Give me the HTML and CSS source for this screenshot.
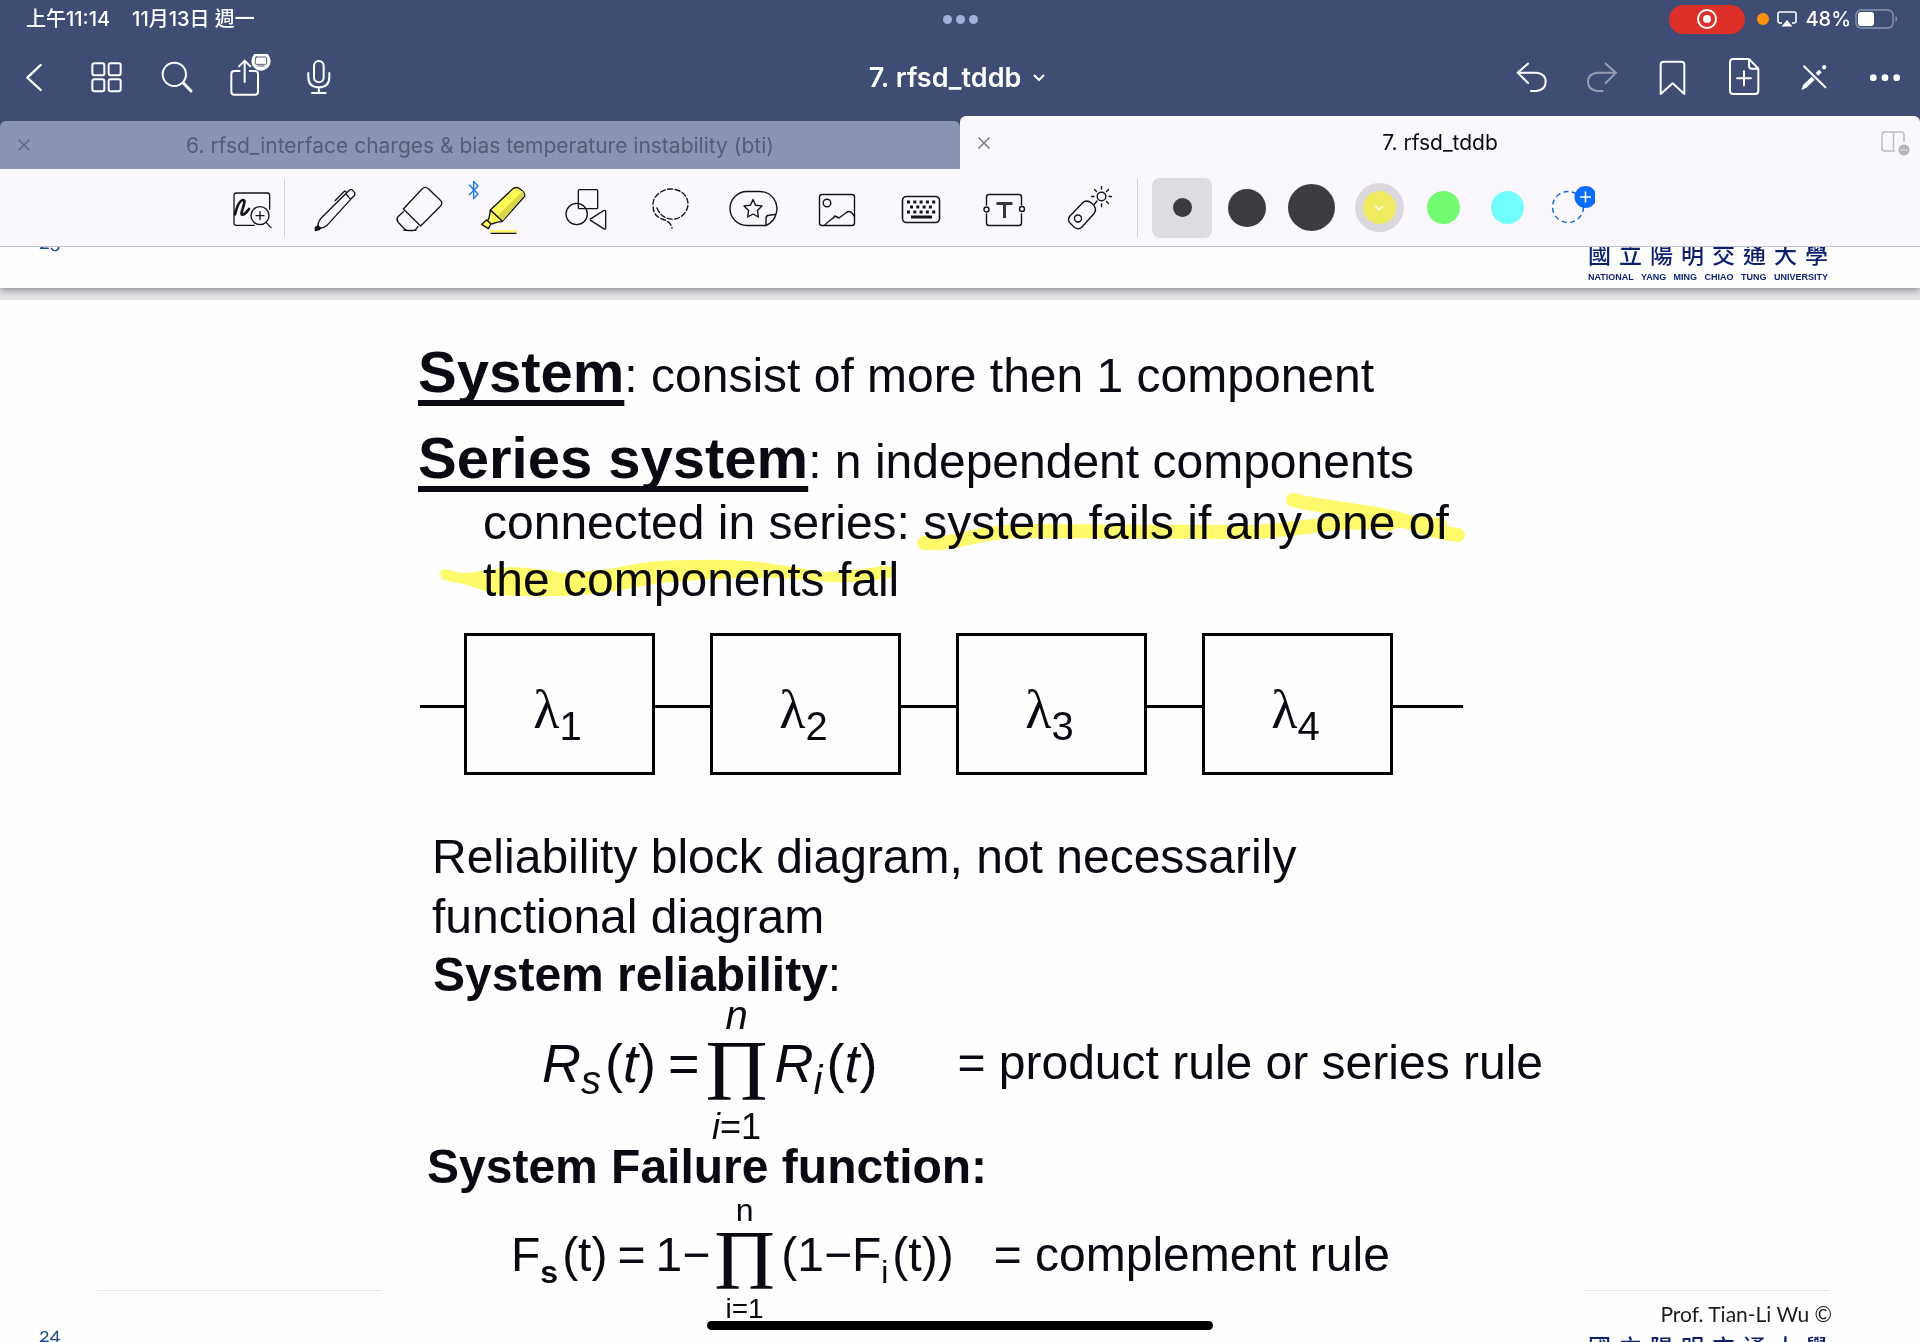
FILE: index.html
```html
<!DOCTYPE html>
<html lang="zh-Hant">
<head>
<meta charset="utf-8">
<meta name="viewport" content="width=device-width, initial-scale=1">
<title>7. rfsd_tddb</title>
<link rel="stylesheet" href="styles.css">
</head>
<body>
<div class="app">
  <header class="topbar">
    <div class="status">
      <div class="status-time"><span>上午11:14</span><span>11月13日 週一</span></div>
      <div class="status-dots"><i></i><i></i><i></i></div>
      <div class="status-right">
        <span class="recording"><svg width="22" height="22" viewBox="0 0 22 22"><circle cx="11" cy="11" r="9" fill="none" stroke="#fff" stroke-width="2"/><circle cx="11" cy="11" r="4" fill="#fff"/></svg></span>
        <span class="mic-dot"></span>
        <svg width="20" height="16" viewBox="0 0 20 16"><path d="M5 12H3a2 2 0 0 1-2-2V3a2 2 0 0 1 2-2h14a2 2 0 0 1 2 2v7a2 2 0 0 1-2 2h-2" fill="none" stroke="#fff" stroke-width="1.6"/><path d="M10 9l5.500 6.500h-11z" fill="#fff"/></svg>
        <span class="battery-label">48%</span>
        <svg width="43" height="20" viewBox="0 0 43 20"><rect x="1" y="1" width="37" height="18" rx="5" fill="none" stroke="#8b95b3" stroke-width="1.400"/><rect x="3" y="3" width="16" height="14" rx="3" fill="#fff"/><path d="M40.500 7c2 1 2 5 0 6z" fill="#8b95b3"/></svg>
      </div>
    </div>
    <nav class="nav">
      <div class="nav-group">
        <button class="nav-btn" aria-label="Back"><svg viewBox="35 162 144 144"><path d="M121 195L81 233l40 37" stroke-width="7"/></svg></button>
        <button class="nav-btn" aria-label="Thumbnails"><svg viewBox="248 162 144 144"><rect x="276" y="190" width="36" height="36" rx="6"/><rect x="325" y="190" width="36" height="36" rx="6"/><rect x="276" y="238" width="36" height="36" rx="6"/><rect x="325" y="238" width="36" height="36" rx="6"/></svg></button>
        <button class="nav-btn" aria-label="Search"><svg viewBox="461 162 144 144"><circle cx="522" cy="223" r="35"/><path d="M549 249l23 24" stroke-width="9"/></svg></button>
        <button class="nav-btn" aria-label="Share"><svg viewBox="674 162 144 144"><path d="M718 213h-16q-9 0-9 9v53q0 9 9 9h62q9 0 9-9v-53q0-9-9-9h-16M733 246v-64M716 199l17-17 17 17"/><circle cx="782" cy="183" r="29" fill="#fff" stroke="none"/><rect x="765" y="171" width="34" height="22" rx="3" stroke="#555b70" stroke-width="3"/><path d="M773 198h18" stroke="#555b70" stroke-width="3"/></svg></button>
        <button class="nav-btn" aria-label="Record"><svg viewBox="887 162 144 144"><rect x="941" y="183" width="29" height="64" rx="14.500"/><path d="M924 219v12q0 31 31.500 31t31.500-31v-12M955.500 262v17M935 279h41"/></svg></button>
      </div>
      <button class="doc-title">7. rfsd_tddb<svg width="12" height="8" viewBox="0 0 12 8"><path d="M1.500 1.500L6 6l4.500-4.500" stroke-width="2"/></svg></button>
      <div class="nav-group nav-end">
        <button class="nav-btn" aria-label="Undo"><svg viewBox="198 162 144 144"><path d="M264 191l-31 27 31 31M233 218h56q28 3 28 27t-28 28h-16"/></svg></button>
        <button class="nav-btn dim" aria-label="Redo"><svg viewBox="411 162 144 144"><path d="M497 191l31 27-31 31M528 218h-56q-28 3-28 27t28 28h16"/></svg></button>
        <button class="nav-btn" aria-label="Bookmark"><svg viewBox="624 162 144 144"><path d="M662 282v-88q0-9 9-9h53q9 0 9 9v88l-35-32z"/></svg></button>
        <button class="nav-btn" aria-label="Add page"><svg viewBox="837 162 144 144"><path d="M927 177h-47q-10 0-10 10v85q0 10 10 10h65q10 0 10-10v-66zM927 177v20q0 9 9 9h19M912 214v42M891 235h42"/></svg></button>
        <button class="nav-btn" aria-label="Read only"><svg viewBox="1050 162 144 144"><path d="M1092 199l64 63"/><path d="M1084 271l6-17 25-24 9 9-25 24z" fill="#fff" stroke="none"/><path d="M1131 223l10-10" stroke-width="11" stroke-linecap="butt"/><path d="M1152 202l1-1" stroke-width="12"/></svg></button>
        <button class="nav-btn" aria-label="More"><svg viewBox="1263 162 144 144"><g fill="#fff" stroke="none"><circle cx="1300" cy="233" r="10"/><circle cx="1335" cy="233" r="10"/><circle cx="1370" cy="233" r="10"/></g></svg></button>
      </div>
    </nav>
    <div class="tabs">
      <div class="tab">
        <button class="tab-close" aria-label="Close tab"><svg width="14" height="14" viewBox="0 0 14 14"><path d="M1.500 1.500l11 11M12.500 1.500l-11 11"/></svg></button>
        <a class="tab-name" href="#bti">6. rfsd_interface charges &amp; bias temperature instability (bti)</a>
      </div>
      <div class="tab tab-active">
        <button class="tab-close" aria-label="Close tab"><svg width="14" height="14" viewBox="0 0 14 14"><path d="M1.500 1.500l11 11M12.500 1.500l-11 11"/></svg></button>
        <a class="tab-name" href="#tddb">7. rfsd_tddb</a>
        <button class="tab-split" aria-label="Split view"><svg width="30" height="26" viewBox="1 0 30 26"><path d="M15 21H5q-3 0-3-3V5q0-3 3-3h16q3 0 3 3v7M13.500 2v19" fill="none" stroke="#bdbcc2" stroke-width="1.500"/><circle cx="24" cy="20" r="5.500" fill="#b4b3b9"/><path d="M21.500 20h.1M24 20h.1M26.500 20h.1" stroke="#fff" stroke-width="1.500" stroke-linecap="round"/></svg></button>
      </div>
    </div>
  </header>

  <div class="toolbar">
    <button class="tool tool-zoom" aria-label="Zoom window"><svg viewBox="84 75 144 144"><path d="M163 196h-54q-7 0-7-7v-83q0-7 7-7h93q7 0 7 7v42"/><path d="M105 163c5-20 14-43 25-43 12 0-13 44-3 44 9 0 14-10 20-17" stroke-width="8"/><circle cx="180" cy="167" r="27"/><path d="M168 167h24M180 155v24M199 188l14 15" stroke-width="4"/></svg></button>
    <span class="divider"></span>
    <div class="tool-list">
      <button class="tool" aria-label="Pen"><svg viewBox="333 75 144 144"><path d="M437 101l13-12 6 0 8 9v8l-12 12zM437 101l-74 74q-10 11-9 22l4 7q12 2 23-8l71-78"/><path d="M405 122l29-29 6 4"/><path d="M353 198l-7 5 0 9 11-3 5-5z" fill="#14131a"/></svg></button>
      <button class="tool" aria-label="Eraser"><svg viewBox="585 75 144 144"><path d="M610 147l56-60q10-10 20 0l35 34q9 9 0 18l-59 59zM610 155l-16 15q-6 8 0 16l19 21q5 5 14 5h12q7-1 11-7l4-6M612 211h36"/></svg></button>
      <button class="tool" aria-label="Highlighter"><svg viewBox="837 75 144 144"><path d="M871 150l69-65q12-6 20 2l10 8q7 9 2 16l-65 73z" fill="#fcfc58"/><path d="M892 168l76-75 5 12-66 78z" fill="#d9d64a" stroke="none"/><path d="M871 150l36 34-20 4q-12 6-16 2l-8-9q4-5 5-12zM860 180l13 12-8 14-20-13z" fill="#fcfc58"/><path d="M873 214h75" stroke="#fcf86a" stroke-width="8"/><path d="M873 220h75"/><path d="M808 75l26 27-13 14V64l13 14-26 26" stroke="#1177e6" stroke-width="4"/></svg></button>
      <button class="tool" aria-label="Shapes"><svg viewBox="1089 75 144 144"><rect x="1135" y="89" width="58" height="57" rx="3"/><circle cx="1130" cy="162" r="32"/><path d="M1173 176l38-24q6-3 6 4v47q0 7-6 3l-38-24q-5-3 0-6z"/></svg></button>
      <button class="tool" aria-label="Lasso"><svg viewBox="0 0 48 48"><path d="M10 23C13 31 20 35 28 34c7-1 13-8 13-15C41 10 33 4 24 4S6 11 6 19c0 8 2 12 9 15 6 2 9 4 10 9" stroke-width="1.400" stroke-dasharray="5 2.500"/></svg></button>
      <button class="tool" aria-label="Stickers"><svg viewBox="0 0 48 48"><path d="M35 40.500H16A17 17 0 0 1 16 6.500h13A17 17 0 0 1 45 29q-2 8-10 11.500v-7q0-3 3-3.200l7-1" stroke-width="1.400"/><path d="M22 14.500l2.600 5.800 6.400.6-4.600 4.500 1 6.600-5.400-3-5.400 3 1-6.600-4.600-4.500 6.400-.6z" stroke-width="1.400"/></svg></button>
      <button class="tool" aria-label="Image"><svg viewBox="0 0 48 48"><rect x="4.500" y="9.500" width="35" height="31" rx="2.500" stroke-width="1.400"/><circle cx="12" cy="18" r="3.800" stroke-width="1.400"/><path d="M10 40c4-5 8-6 10-9l4 2 8-6q4-2 7 4" stroke-width="1.400"/></svg></button>
      <button class="tool" aria-label="Keyboard"><svg viewBox="0 0 48 48"><rect x="3.500" y="11.500" width="37" height="26" rx="4" stroke-width="1.600"/><g stroke-linecap="butt" stroke-width="3"><path d="M8 17h28.500" stroke-dasharray="3 3.300"/><path d="M11 22h23" stroke-dasharray="3 3.300"/><path d="M8 27h28.500" stroke-dasharray="3 3.300"/><path d="M12 32h21"/></g></svg></button>
      <button class="tool" aria-label="Text"><svg viewBox="0 0 48 48"><path d="M3.500 20v-8q0-2.500 2.500-2.500h30q2.500 0 2.500 2.500v8M3.500 29v9q0 2.500 2.500 2.500h30q2.500 0 2.500-2.500v-9" stroke-width="1.400"/><circle cx="3.500" cy="24.500" r="2.500" stroke-width="1.400"/><circle cx="39" cy="24" r="2.500" stroke-width="1.400"/><path d="M13.500 18.500h16M21.500 19v14" stroke-width="3" stroke-linecap="butt" stroke="#37363c"/></svg></button>
      <button class="tool" aria-label="Laser pointer"><svg viewBox="0 0 48 48"><path d="M2.500 31.500L15.500 18q4-4 9 0 6 5 3 10L14.500 42.500q-3 2.500-7 0l-5-5q-2-3 0-6z" stroke-width="1.400"/><circle cx="11" cy="33.500" r="3.500" stroke-width="1.400"/><circle cx="34.500" cy="11.500" r="4.300" stroke-width="1.400"/><path d="M34.500 1.500v2.500M34.500 19v2.500M24.500 11.500H27M42 11.500h2.500M27.500 4.500l2 2M41.500 4.500l-2 2M41.500 18.500l-2-2M30 16l-3 3.500" stroke-width="1.400"/></svg></button>
    </div>
    <span class="divider"></span>
    <div class="swatches">
      <button class="swatch selected" aria-label="Thin stroke"><span class="dot dot-s"></span></button>
      <button class="swatch" aria-label="Medium stroke"><span class="dot dot-m"></span></button>
      <button class="swatch" aria-label="Thick stroke"><span class="dot dot-l"></span></button>
    </div>
    <div class="colors">
      <button class="swatch" aria-label="Yellow"><span class="color color-yellow"><svg width="10" height="6" viewBox="0 0 10 6"><path d="M1 1l4 3.500L9 1" fill="none" stroke="#fff" stroke-width="1.500"/></svg></span></button>
      <button class="swatch" aria-label="Green"><span class="color color-green"></span></button>
      <button class="swatch" aria-label="Cyan"><span class="color color-cyan"></span></button>
      <button class="swatch" aria-label="Add colour"><svg width="48" height="48" viewBox="0 0 48 48"><circle cx="21" cy="23" r="15.500" fill="none" stroke="#1266d8" stroke-width="1.400" stroke-dasharray="5 3.500"/><circle cx="38.500" cy="13" r="11" fill="#0a6cff"/><path d="M33 13h11M38.500 7.500v11" stroke="#fff" stroke-width="1.600"/></svg></button>
    </div>
  </div>

  <main class="document">
    <section class="page page-prev">
      <footer class="page-footer">
        <div class="page-number">23</div>
        <div class="credit">
          <p class="author">Prof. Tian-Li Wu ©</p>
          <p class="uni-zh">國 立 陽 明 交 通 大 學</p>
          <p class="uni-en">NATIONAL YANG MING CHIAO TUNG UNIVERSITY</p>
        </div>
      </footer>
    </section>

    <section class="page page-current">
      <div class="slide">
        <p class="definition"><strong>System</strong>: consist of more then 1 component</p>
        <p class="definition definition-next"><strong>Series system</strong>: n independent components</p>
        <p class="continuation">connected in series: system fails if any one of<br>the components fail</p>

        <div class="diagram">
          <span class="wire wire-in"></span>
          <div class="block">λ<sub>1</sub></div>
          <span class="wire"></span>
          <div class="block">λ<sub>2</sub></div>
          <span class="wire"></span>
          <div class="block">λ<sub>3</sub></div>
          <span class="wire"></span>
          <div class="block">λ<sub>4</sub></div>
          <span class="wire wire-out"></span>
        </div>

        <p class="caption">Reliability block diagram, not necessarily<br>functional diagram</p>

        <h2 class="heading"><b>System reliability</b>:</h2>
        <div class="formula formula-reliability">
          <span class="term"><i>R<sub>s</sub></i>(<i>t</i>)</span>
          <span class="term">=</span>
          <span class="operator"><span class="limit"><i>n</i></span><span class="product">Π</span><span class="limit limit-low"><i>i</i>=1</span></span>
          <span class="term"><i>R<sub>i</sub></i>(<i>t</i>)</span>
          <span class="rule">= product rule or series rule</span>
        </div>

        <h2 class="heading heading-failure"><b>System Failure function:</b></h2>
        <div class="formula formula-failure">
          <span class="term">F<sub><b>s</b></sub>(t)</span>
          <span class="term">=</span>
          <span class="term">1−</span>
          <span class="operator"><span class="limit">n</span><span class="product">Π</span><span class="limit limit-low">i=1</span></span>
          <span class="term">(1−F<sub>i</sub>(t))</span>
          <span class="rule">= complement rule</span>
        </div>
      </div>

      <svg class="ink" width="1920" height="340" viewBox="0 300 1920 340" aria-hidden="true">
        <g fill="none" stroke="#fffb6b" stroke-width="14" stroke-linecap="round" stroke-linejoin="round">
          <path d="M924 543C970 544 965 532 1030 531L1240 532C1300 532 1330 518 1390 524M1293 500C1330 509 1380 512 1402 520C1430 530 1440 533 1458 535M1390 520L1440 525"/>
        </g>
        <path fill="#fffb6b" d="M446 569Q456 573 468 573L510 567Q540 568 563 573Q600 571 620 567Q653 559 694 560Q740 559 767 563L824 572Q860 570 882 566Q896 565 895 572Q894 578 888 578Q860 583 829 582Q780 577 747 578Q700 579 661 583L604 593Q560 597 531 596Q500 596 490 593Q465 583 443 580Q436 570 446 569Z"/>
      </svg>

      <footer class="page-footer">
        <div class="page-number">24</div>
        <div class="credit">
          <p class="author">Prof. Tian-Li Wu ©</p>
          <p class="uni-zh">國 立 陽 明 交 通 大 學</p>
          <p class="uni-en">NATIONAL YANG MING CHIAO TUNG UNIVERSITY</p>
        </div>
      </footer>
    </section>
  </main>
  <div class="home-indicator"></div>
</div>
</body>
</html>
```
FILE: styles.css
```css
* { box-sizing: border-box; }

body {
  margin: 0;
  font-family: Inter, "Noto Sans CJK TC", sans-serif;
  color: #0b0b0e;
}

button {
  display: flex;
  align-items: center;
  justify-content: center;
  padding: 0;
  border: 0;
  background: none;
  font: inherit;
  color: inherit;
}

p, h2 { margin: 0; }
a { color: inherit; text-decoration: none; }

.app {
  position: relative;
  display: flex;
  flex-direction: column;
  height: 100vh;
  overflow: hidden;
}

/* Status bar */
.topbar { background: #3f4d75; color: #fff; }

.status {
  display: grid;
  grid-template-columns: 1fr auto 1fr;
  align-items: center;
  height: 40px;
  padding: 0 22px 2px;
}

.status-time { display: flex; gap: 22px; padding-left: 4px; font-size: 20px; font-weight: 500; line-height: 24px; }
.status-dots { display: flex; gap: 4px; }
.status-dots i { width: 9px; height: 9px; border-radius: 50%; background: #a1afdb; }

.status-right { display: flex; align-items: center; justify-content: flex-end; gap: 8px; }
.status-right svg { flex: none; }
.recording {
  display: flex;
  align-items: center;
  justify-content: center;
  width: 76px;
  height: 29px;
  margin-right: 4px;
  border-radius: 15px;
  background: #dc3029;
}
.mic-dot { width: 12px; height: 12px; border-radius: 50%; background: #ff920a; }
.battery-label { font-size: 20px; font-weight: 500; line-height: 24px; }
.battery-label + svg { margin-left: -4px; }

/* Navigation */
.nav {
  display: grid;
  grid-template-columns: 1fr auto 1fr;
  align-items: center;
  height: 75px;
}
.nav-group { display: flex; }
.nav-end { justify-content: flex-end; }
.nav-btn { width: 71px; height: 75px; }
.nav-btn svg { width: 48px; height: 48px; }
.nav svg {
  fill: none;
  stroke: #fff;
  stroke-width: 6;
  stroke-linecap: round;
  stroke-linejoin: round;
}
.dim { opacity: .45; }
.doc-title { gap: 12px; padding-right: 6px; font-size: 27px; font-weight: 600; }

/* Tabs */
.tabs { display: grid; grid-template-columns: 1fr 1fr; align-items: end; height: 54px; }
.tab {
  display: grid;
  grid-template-columns: 48px 1fr 48px;
  align-items: center;
  height: 48px;
  border-radius: 6px 6px 0 0;
  background: #8b93b2;
  color: #565c76;
  font-size: 21px;
  text-align: center;
}
.tab-active { height: 53px; background: #faf8fc; color: #0b0b0e; }
.tab-close svg { fill: none; stroke: #61667d; stroke-width: 1.5; }
.tab-active .tab-close svg { stroke: #77767c; }

/* Toolbar */
.toolbar {
  display: flex;
  align-items: center;
  flex: none;
  height: 78px;
  padding-left: 220px;
  border-bottom: 1px solid #c3c2c6;
  background: #faf8fc;
}
.tool-list { display: flex; margin: 0 4px 0 8px; }
.tool { width: 84px; height: 77px; padding-top: 2px; }
.tool-zoom { width: 64px; }
.tool svg {
  width: 48px;
  height: 48px;
  overflow: visible;
  fill: none;
  stroke: #14131a;
  stroke-width: 4;
  stroke-linecap: round;
  stroke-linejoin: round;
}
.divider { width: 1px; height: 58px; background: #d3d1d6; }

.swatches { display: flex; margin-left: 14px; }
.colors { display: flex; margin-left: 4px; }
.swatch { width: 64px; height: 60px; }
.selected { width: 60px; margin-right: 3px; border-radius: 8px; background: #dedce1; }
.dot { border-radius: 50%; background: #3d3b3f; }
.dot-s { width: 19px; height: 19px; }
.dot-m { width: 38px; height: 38px; }
.dot-l { width: 47px; height: 47px; }
.color {
  display: flex;
  align-items: center;
  justify-content: center;
  width: 33px;
  height: 33px;
  border-radius: 50%;
}
.color-yellow { background: #f0ec62; box-shadow: 0 0 0 8px #dbd9de; }
.color-green { background: #70fb71; }
.color-cyan { background: #72feff; }

/* Document */
.document { flex: 1; min-height: 0; overflow: hidden; background: #e3e1e4; }
.page { background: #fefefe; }
.page-prev {
  display: flex;
  align-items: flex-end;
  height: 41px;
  margin-bottom: 12px;
  overflow: clip;
  box-shadow: 0 1px 8px #77757a;
}
.page-current { position: relative; display: grid; height: 1081px; }
.page-current > * { grid-area: 1 / 1; }

.page-footer {
  display: grid;
  grid-template-columns: 284px 246px;
  justify-content: space-between;
  align-self: end;
  flex: 1;
  height: 91px;
  padding: 0 90px 0 98px;
}
.page-number {
  margin-left: -59px;
  padding: 29px 0 0 59px;
  border-top: 1px solid transparent;
  border-image: linear-gradient(to right, transparent 59px, #e6e6e6 59px) 1;
  text-indent: -59px;
  font: 20px/28px Lato, sans-serif;
  font-variant-numeric: oldstyle-nums;
  color: #1f4a8a;
}
.credit {
  padding: 10px 2px 0 4px;
  border-top: 1px solid #e6e6e6;
}
.author {
  margin-right: -4px;
  font: 21px/26px Lato, sans-serif;
  text-align: right;
  white-space: nowrap;
  color: #1c1c1c;
}
.uni-zh {
  padding-top: 6px;
  font: 500 23px/26px "Noto Sans CJK TC", sans-serif;
  text-align-last: justify;
  color: #0c1f6d;
}
.uni-en {
  padding-top: 5px;
  font: bold 9px/12px "Liberation Sans", sans-serif;
  text-align-last: justify;
  white-space: nowrap;
  color: #0c1f6d;
}

/* Slide */
.slide {
  padding: 46px 0 0 418px;
  font-family: "Liberation Sans", Arial, sans-serif;
  font-size: 48px;
  color: #0a0a12;
  white-space: nowrap;
}
.definition { line-height: 60px; }
.definition strong {
  font-size: 58px;
  line-height: 0;
  text-decoration: underline;
  text-decoration-thickness: 6px;
  text-underline-offset: 8px;
  text-decoration-skip-ink: none;
}
.definition-next { margin-top: 26px; }
.continuation { margin-top: 2px; padding-left: 65px; line-height: 57px; }

.ink {
  position: absolute;
  top: 0;
  left: 0;
  mix-blend-mode: multiply;
  pointer-events: none;
}

.diagram { display: flex; align-items: center; margin: 25px 0 52px 2px; }
.wire { width: 55px; height: 3px; margin-top: 5px; background: #000; }
.wire-in { width: 44px; }
.wire-out { width: 70px; }
.block {
  width: 191px;
  height: 142px;
  padding: 24px 4px 0 0;
  border: 3px solid #000;
  font: 54px/100px "Liberation Serif", serif;
  text-align: center;
}
.block sub { font: 40px/1 "Liberation Sans", sans-serif; line-height: 0; vertical-align: -12px; }

.caption { padding-left: 14px; line-height: 60px; }
.heading { padding-left: 15px; font-size: 48px; font-weight: 400; line-height: 56px; }
.heading-failure { padding-left: 9px; }

.formula { display: flex; align-items: flex-start; }
.formula sub { margin-right: 4px; line-height: 0; vertical-align: -12px; }
.term, .rule { padding-top: 30px; line-height: 60px; }
.operator { display: grid; justify-items: center; width: 60px; margin: 0 -3px 0 -6px; }
.product { font-family: "Liberation Serif", serif; }

.formula-reliability { gap: 12px; height: 136px; padding-left: 124px; }
.formula-reliability .term { font-size: 54px; }
.formula-reliability sub { font-size: 40px; }
.formula-reliability .operator { grid-template-rows: 24px 88px 24px; }
.formula-reliability .limit { font-size: 40px; line-height: 24px; }
.formula-reliability .limit-low { font-size: 36px; }
.formula-reliability .product { font-size: 86px; line-height: 88px; }
.formula-reliability .rule { margin-left: 68px; }

.formula-failure { gap: 10px; padding-left: 93px; }
.formula-failure sub { font-size: 32px; }
.formula-failure .operator { grid-template-rows: 30px 72px 24px; }
.formula-failure .limit { font-size: 32px; line-height: 30px; }
.formula-failure .limit-low { font-size: 28px; line-height: 24px; }
.formula-failure .product { font-size: 84px; line-height: 72px; }
.formula-failure .rule { margin-left: 30px; }

.home-indicator {
  position: absolute;
  bottom: 12px;
  left: 50%;
  width: 506px;
  height: 9px;
  margin-left: -253px;
  border-radius: 5px;
  background: #000;
}
```
